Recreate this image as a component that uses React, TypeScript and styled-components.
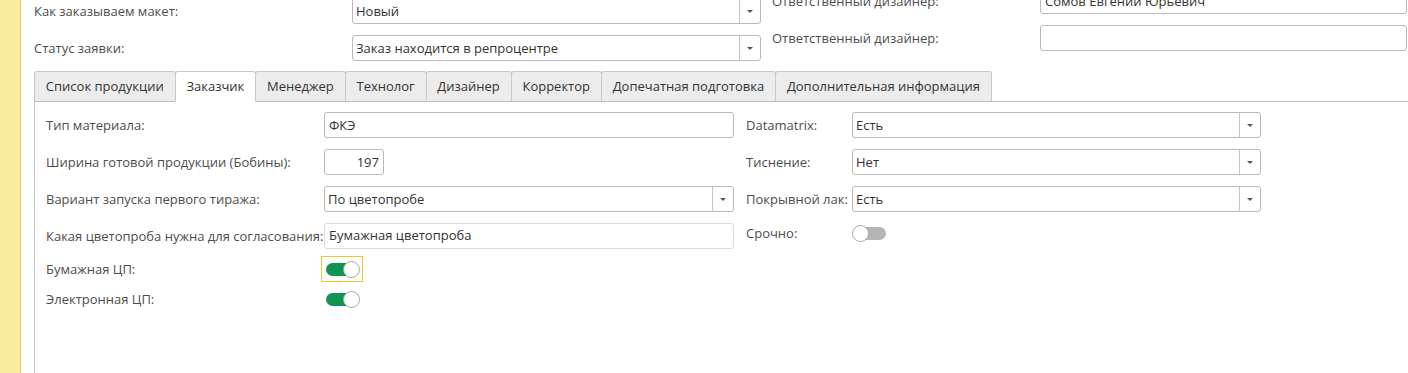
import styled, { createGlobalStyle } from 'styled-components';

const GlobalStyle = createGlobalStyle`
  html, body {
    margin: 0;
    padding: 0;
    background: #fff;
    overflow: hidden;
  }
  body {
    font-family: "Open Sans", "Noto Sans", Arial, sans-serif;
    font-size: 13px;
    color: #4d4d4d;
  }
`;

const Page = styled.div`
  display: flex;
  height: 373px;
  width: 1408px;
  overflow: hidden;
`;

const SideStrip = styled.div`
  flex: 0 0 20px;
  background: #fbeb9c;
  border-right: 1px solid #d8c983;
`;

const Main = styled.div`
  flex: 1;
  min-width: 0;
  padding-left: 13px;
  margin-top: -2px;
  display: flex;
  flex-direction: column;
`;

const Header = styled.div`
  display: flex;
  gap: 11px;
`;

const HeaderColumn = styled.div<{ $shift?: number }>`
  display: flex;
  flex-direction: column;
  gap: 11px;
  margin-top: ${p => p.$shift ?? 0}px;
`;

const Row = styled.div<{ $labelWidth: number; $height?: number }>`
  display: grid;
  grid-template-columns: ${p => p.$labelWidth}px auto;
  align-items: center;
  height: ${p => p.$height ?? 26}px;
`;

const Label = styled.span`
  color: #4d4d4d;
  white-space: nowrap;
`;

const Field = styled.div<{ $width: number; $align?: 'left' | 'right'; $muted?: boolean }>`
  box-sizing: border-box;
  width: ${p => p.$width}px;
  height: 26px;
  border: 1px solid ${p => (p.$muted ? '#dcdcdc' : '#b9b9b9')};
  border-radius: 3px;
  background: #fff;
  color: #333;
  display: flex;
  align-items: center;
  justify-content: ${p => (p.$align === 'right' ? 'flex-end' : 'flex-start')};
  padding: 0 4px 1px 4px;
  white-space: nowrap;
  overflow: hidden;
`;

const ComboBox = styled(Field)`
  padding: 0;
`;

const ComboValue = styled.span`
  flex: 1;
  padding: 0 4px 1px 3px;
`;

const ComboButton = styled.span`
  flex: 0 0 20px;
  height: 100%;
  border-left: 1px solid #c4c4c4;
  display: flex;
  align-items: center;
  justify-content: center;
  &::after {
    content: '';
    border-left: 3px solid transparent;
    border-right: 3px solid transparent;
    border-top: 3px solid #555;
  }
`;

const TabBar = styled.div`
  display: flex;
  align-items: flex-end;
  height: 30px;
  margin-top: 10px;
  border-bottom: 1px solid #bdbdbd;
  margin-right: -20px;
`;

const Tab = styled.div<{ $active?: boolean }>`
  box-sizing: border-box;
  height: ${p => (p.$active ? 31 : 30)}px;
  margin-bottom: ${p => (p.$active ? -1 : 0)}px;
  padding: 0 10.85px 1px;
  display: flex;
  align-items: center;
  white-space: nowrap;
  color: #333;
  background: ${p => (p.$active ? '#fff' : '#ececec')};
  border: 1px solid #c8c8c8;
  border-bottom: ${p => (p.$active ? '1px solid #fff' : 'none')};
  border-radius: 3px 3px 0 0;
  & + & {
    margin-left: -1px;
  }
`;

const Panel = styled.div`
  flex: 1;
  border-left: 1px solid #c8c8c8;
  margin-right: -20px;
  padding: 10px 0 0 11px;
  display: flex;
  gap: 12px;
`;

const PanelColumn = styled.div`
  display: flex;
  flex-direction: column;
`;

const Spacer = styled.div<{ $h: number }>`
  height: ${p => p.$h}px;
`;

const FocusFrame = styled.div<{ $focused?: boolean }>`
  box-sizing: border-box;
  width: 42px;
  height: 26px;
  margin-left: -3px;
  border: 1px solid ${p => (p.$focused ? '#f2c82f' : 'transparent')};
  display: flex;
  align-items: center;
  padding-left: 4px;
`;

const Toggle = styled.div<{ $on?: boolean }>`
  position: relative;
  width: 34px;
  height: 17px;
  &::before {
    content: '';
    position: absolute;
    left: ${p => (p.$on ? 0 : 4)}px;
    right: ${p => (p.$on ? 4 : 0)}px;
    top: 2px;
    height: 13px;
    border-radius: 7px;
    background: ${p => (p.$on ? '#0f9550' : '#b5b5b5')};
  }
  &::after {
    content: '';
    position: absolute;
    top: 0;
    left: ${p => (p.$on ? 17 : 0)}px;
    box-sizing: border-box;
    width: 17px;
    height: 17px;
    border-radius: 50%;
    background: #fff;
    border: 1px solid #a8a8a8;
  }
`;

const tabs = [
  'Список продукции',
  'Заказчик',
  'Менеджер',
  'Технолог',
  'Дизайнер',
  'Корректор',
  'Допечатная подготовка',
  'Дополнительная информация',
];

const Combo = ({ value, width }: { value: string; width: number }) => (
  <ComboBox $width={width}>
    <ComboValue>{value}</ComboValue>
    <ComboButton />
  </ComboBox>
);

export default function App() {
  return (
    <>
      <GlobalStyle />
      <Page>
        <SideStrip />
        <Main>
          <Header>
            <HeaderColumn>
              <Row $labelWidth={318}>
                <Label>Как заказываем макет:</Label>
                <Combo value="Новый" width={409} />
              </Row>
              <Row $labelWidth={318}>
                <Label>Статус заявки:</Label>
                <Combo value="Заказ находится в репроцентре" width={409} />
              </Row>
            </HeaderColumn>
            <HeaderColumn $shift={-10}>
              <Row $labelWidth={268}>
                <Label>Ответственный дизайнер:</Label>
                <Field $width={367}>Сомов Евгений Юрьевич</Field>
              </Row>
              <Row $labelWidth={268}>
                <Label>Ответственный дизайнер:</Label>
                <Field $width={367} />
              </Row>
            </HeaderColumn>
          </Header>

          <TabBar>
            {tabs.map(t => (
              <Tab key={t} $active={t === 'Заказчик'}>{t}</Tab>
            ))}
          </TabBar>

          <Panel>
            <PanelColumn>
              <Row $labelWidth={278}>
                <Label>Тип материала:</Label>
                <Field $width={410}>ФКЭ</Field>
              </Row>
              <Spacer $h={11} />
              <Row $labelWidth={278}>
                <Label>Ширина готовой продукции (Бобины):</Label>
                <Field $width={60} $align="right">197</Field>
              </Row>
              <Spacer $h={11} />
              <Row $labelWidth={278}>
                <Label>Вариант запуска первого тиража:</Label>
                <Combo value="По цветопробе" width={410} />
              </Row>
              <Spacer $h={10} />
              <Row $labelWidth={278} $height={27}>
                <Label>Какая цветопроба нужна для согласования:</Label>
                <Field $width={410} $muted>Бумажная цветопроба</Field>
              </Row>
              <Spacer $h={7} />
              <Row $labelWidth={278}>
                <Label>Бумажная ЦП:</Label>
                <FocusFrame $focused>
                  <Toggle $on />
                </FocusFrame>
              </Row>
              <Spacer $h={4} />
              <Row $labelWidth={278}>
                <Label>Электронная ЦП:</Label>
                <FocusFrame>
                  <Toggle $on />
                </FocusFrame>
              </Row>
            </PanelColumn>

            <PanelColumn>
              <Row $labelWidth={106}>
                <Label>Datamatrix:</Label>
                <Combo value="Есть" width={409} />
              </Row>
              <Spacer $h={11} />
              <Row $labelWidth={106}>
                <Label>Тиснение:</Label>
                <Combo value="Нет" width={409} />
              </Row>
              <Spacer $h={11} />
              <Row $labelWidth={106}>
                <Label>Покрывной лак:</Label>
                <Combo value="Есть" width={409} />
              </Row>
              <Spacer $h={10} />
              <Row $labelWidth={106} $height={22}>
                <Label>Срочно:</Label>
                <Toggle />
              </Row>
            </PanelColumn>
          </Panel>
        </Main>
      </Page>
    </>
  );
}
